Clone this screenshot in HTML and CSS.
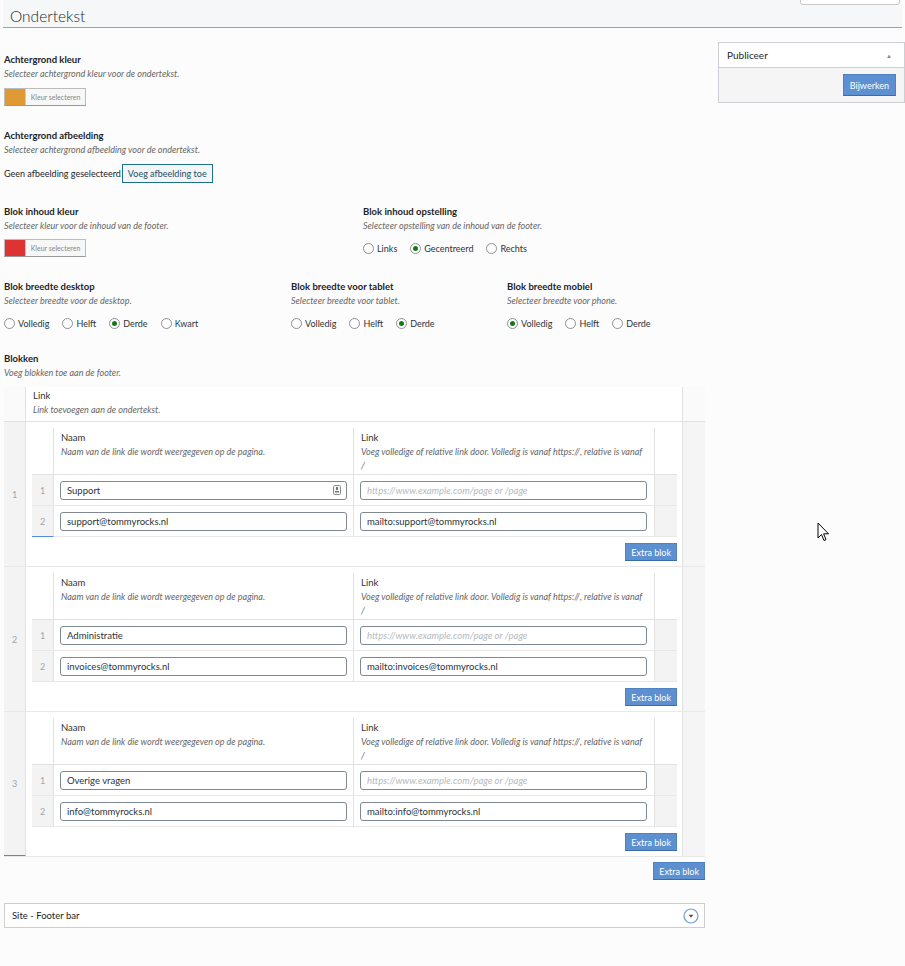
FILE: index.html
```html
<!DOCTYPE html>
<html lang="nl">
<head>
  <meta charset="UTF-8" />
  <title>Ondertekst</title>
  <link rel="stylesheet" href="styles.css">
</head>
<body>
  <!-- Screen options tab (cut off at top) -->
  <div class="screen-tab"></div>

  <header class="page-head">
    <h1>Ondertekst</h1>
  </header>

  <div class="columns">
    <main class="main">

      <div class="field">
        <div class="label">Achtergrond kleur</div>
        <div class="desc">Selecteer achtergrond kleur voor de ondertekst.</div>
        <div class="control">
          <button class="color-pick"><span class="swatch orange"></span><span class="pick-text">Kleur selecteren</span></button>
        </div>
      </div>

      <div class="field">
        <div class="label">Achtergrond afbeelding</div>
        <div class="desc">Selecteer achtergrond afbeelding voor de ondertekst.</div>
        <div class="control">
          <span class="no-image">Geen afbeelding geselecteerd</span>
          <button class="btn-outline">Voeg afbeelding toe</button>
        </div>
      </div>

      <div class="field-row two">
        <div class="field">
          <div class="label">Blok inhoud kleur</div>
          <div class="desc">Selecteer kleur voor de inhoud van de footer.</div>
          <div class="control">
            <button class="color-pick"><span class="swatch red"></span><span class="pick-text">Kleur selecteren</span></button>
          </div>
        </div>
        <div class="field">
          <div class="label">Blok inhoud opstelling</div>
          <div class="desc">Selecteer opstelling van de inhoud van de footer.</div>
          <div class="control">
            <span class="radio"><span class="dot"></span>Links</span>
            <span class="radio on"><span class="dot"></span>Gecentreerd</span>
            <span class="radio"><span class="dot"></span>Rechts</span>
          </div>
        </div>
      </div>

      <div class="field-row three widths">
        <div class="field">
          <div class="label">Blok breedte desktop</div>
          <div class="desc">Selecteer breedte voor de desktop.</div>
          <div class="control">
            <span class="radio"><span class="dot"></span>Volledig</span>
            <span class="radio"><span class="dot"></span>Helft</span>
            <span class="radio on"><span class="dot"></span>Derde</span>
            <span class="radio"><span class="dot"></span>Kwart</span>
          </div>
        </div>
        <div class="field">
          <div class="label">Blok breedte voor tablet</div>
          <div class="desc">Selecteer breedte voor tablet.</div>
          <div class="control">
            <span class="radio"><span class="dot"></span>Volledig</span>
            <span class="radio"><span class="dot"></span>Helft</span>
            <span class="radio on"><span class="dot"></span>Derde</span>
          </div>
        </div>
        <div class="field">
          <div class="label">Blok breedte mobiel</div>
          <div class="desc">Selecteer breedte voor phone.</div>
          <div class="control">
            <span class="radio on"><span class="dot"></span>Volledig</span>
            <span class="radio"><span class="dot"></span>Helft</span>
            <span class="radio"><span class="dot"></span>Derde</span>
          </div>
        </div>
      </div>

      <div class="field blokken">
        <div class="label">Blokken</div>
        <div class="desc">Voeg blokken toe aan de footer.</div>

        <div class="repeater">
          <div class="rep-head">
            <div class="handle"></div>
            <div class="head-cell">
              <div class="col-label">Link</div>
              <div class="col-desc">Link toevoegen aan de ondertekst.</div>
            </div>
            <div class="rm"></div>
          </div>

          <!-- Blok 1 -->
          <div class="rep-row">
            <div class="handle num">1</div>
            <div class="rep-body">
              <div class="links">
                <div class="l-handle"></div>
                <div class="l-head"><div class="col-label">Naam</div><div class="col-desc">Naam van de link die wordt weergegeven op de pagina.</div></div>
                <div class="l-head"><div class="col-label">Link</div><div class="col-desc">Voeg volledige of relative link door. Volledig is vanaf https://, relative is vanaf /</div></div>
                <div class="l-rm"></div>

                <div class="l-num">1</div>
                <div class="l-cell"><div class="input-wrap"><input class="input" value="Support">
                  <svg class="pw-icon" width="8" height="10" viewBox="0 0 8 10"><rect x="0.5" y="0.5" width="7" height="9" rx="1" fill="#f4f4f4" stroke="#8a8a8a"/><rect x="3" y="2" width="2" height="3" fill="#777"/><rect x="2" y="6" width="4" height="1.5" fill="#777"/></svg>
                </div></div>
                <div class="l-cell"><input class="input" placeholder="https://www.example.com/page or /page"></div>
                <div class="l-side"></div>

                <div class="l-num active">2</div>
                <div class="l-cell"><input class="input" value="support@tommyrocks.nl"></div>
                <div class="l-cell"><input class="input" value="mailto:support@tommyrocks.nl"></div>
                <div class="l-side"></div>
              </div>
              <div class="row-actions"><button class="btn-blue">Extra blok</button></div>
            </div>
            <div class="rm"></div>
          </div>

          <!-- Blok 2 -->
          <div class="rep-row">
            <div class="handle num">2</div>
            <div class="rep-body">
              <div class="links">
                <div class="l-handle"></div>
                <div class="l-head"><div class="col-label">Naam</div><div class="col-desc">Naam van de link die wordt weergegeven op de pagina.</div></div>
                <div class="l-head"><div class="col-label">Link</div><div class="col-desc">Voeg volledige of relative link door. Volledig is vanaf https://, relative is vanaf /</div></div>
                <div class="l-rm"></div>

                <div class="l-num">1</div>
                <div class="l-cell"><input class="input" value="Administratie"></div>
                <div class="l-cell"><input class="input" placeholder="https://www.example.com/page or /page"></div>
                <div class="l-side"></div>

                <div class="l-num">2</div>
                <div class="l-cell"><input class="input" value="invoices@tommyrocks.nl"></div>
                <div class="l-cell"><input class="input" value="mailto:invoices@tommyrocks.nl"></div>
                <div class="l-side"></div>
              </div>
              <div class="row-actions"><button class="btn-blue">Extra blok</button></div>
            </div>
            <div class="rm"></div>
          </div>

          <!-- Blok 3 -->
          <div class="rep-row">
            <div class="handle num active">3</div>
            <div class="rep-body">
              <div class="links">
                <div class="l-handle"></div>
                <div class="l-head"><div class="col-label">Naam</div><div class="col-desc">Naam van de link die wordt weergegeven op de pagina.</div></div>
                <div class="l-head"><div class="col-label">Link</div><div class="col-desc">Voeg volledige of relative link door. Volledig is vanaf https://, relative is vanaf /</div></div>
                <div class="l-rm"></div>

                <div class="l-num">1</div>
                <div class="l-cell"><input class="input" value="Overige vragen"></div>
                <div class="l-cell"><input class="input" placeholder="https://www.example.com/page or /page"></div>
                <div class="l-side"></div>

                <div class="l-num">2</div>
                <div class="l-cell"><input class="input" value="info@tommyrocks.nl"></div>
                <div class="l-cell"><input class="input" value="mailto:info@tommyrocks.nl"></div>
                <div class="l-side"></div>
              </div>
              <div class="row-actions"><button class="btn-blue">Extra blok</button></div>
            </div>
            <div class="rm"></div>
          </div>
        </div>

        <div class="rep-footer"><button class="btn-blue">Extra blok</button></div>
      </div>

      <div class="postbox">
        <span>Site - Footer bar</span>
        <svg width="16" height="16" viewBox="0 0 16 16"><circle cx="8" cy="8" r="7" fill="#fff" stroke="#6b9bd6" stroke-width="1.2"/><path d="M5.5 6.8 L10.5 6.8 L8 9.8 Z" fill="#555"/></svg>
      </div>
    </main>

    <aside class="side">
      <div class="publish">
        <div class="publish-head">
          <span>Publiceer</span>
          <span class="toggle">&#9650;</span>
        </div>
        <div class="publish-actions">
          <button class="btn-blue big">Bijwerken</button>
        </div>
      </div>
    </aside>
  </div>

  <!-- mouse pointer -->
  <svg class="cursor" width="13" height="20" viewBox="0 0 13 20"><path d="M1 1 L1 16 L4.5 12.5 L7 18.5 L9 17.6 L6.6 11.8 L11.5 11.8 Z" fill="#fff" stroke="#000" stroke-width="1" stroke-linejoin="round"/></svg>
</body>
</html>
```

FILE: styles.css
```css
/* Basic Reset */
* {
  box-sizing: border-box;
}

body {
  margin: 0;
  height: 966px;
  overflow: hidden;
  position: relative;
  background-color: #fcfcfc;
  font-family: Lato, "Open Sans", sans-serif;
  font-size: 9px;
  color: #1d2327;
}

button, input {
  font-family: inherit;
}

/* TOP RIGHT TAB */
.screen-tab {
  position: absolute;
  top: -2px;
  left: 800px;
  width: 100px;
  height: 7px;
  background: #fff;
  border: 1px solid #c8c8c8;
  border-radius: 0 0 3px 3px;
}

/* PAGE HEADER */
.page-head {
  margin: 0 3px;
  height: 28px;
  background-color: #f6f7f9;
  border-bottom: 1px solid #8ea1c2;
  padding-left: 7px;
}
.page-head h1 {
  margin: 0;
  font-size: 15.5px;
  font-weight: 300;
  line-height: 33px;
  color: #23282d;
}

.columns {
  display: flex;
  align-items: flex-start;
}

.main {
  width: 701px;
  margin-left: 4px;
  padding-top: 25px;
}

/* FIELDS */
.field {
  margin-bottom: 23px;
}
.field-row {
  display: grid;
}
.field-row .field {
  margin-bottom: 0;
}
.field-row.two {
  grid-template-columns: 359px 1fr;
  margin-bottom: 23px;
}
.field-row.three {
  grid-template-columns: 287px 216px 1fr;
}
.widths {
  margin-bottom: 20px;
}

.label {
  font-weight: 700;
  font-size: 9.5px;
  line-height: 14px;
}
.desc {
  font-style: italic;
  font-size: 9px;
  line-height: 14px;
  color: #666;
}
.control {
  margin-top: 7px;
  height: 18px;
  display: flex;
  align-items: center;
}
.field-row .control {
  margin-top: 6px;
}

/* COLOR PICKER BUTTON */
.color-pick {
  display: flex;
  height: 18px;
  padding: 0;
  border: 1px solid #bcbcbc;
  border-bottom-color: #999;
  background: #f7f7f7;
  cursor: pointer;
}
.swatch {
  width: 20px;
  height: 100%;
}
.swatch.orange { background: #e09a33; }
.swatch.red { background: #dd3333; }
.pick-text {
  padding: 0 4px 0 4px;
  border-left: 1px solid #ccc;
  font-size: 7px;
  line-height: 16px;
  color: #888;
  width: 60px;
}

.no-image {
  margin-right: 1px;
}
.btn-outline {
  height: 19px;
  padding: 0 5px;
  background: #f3f5f6;
  border: 1px solid #1f6f8f;
  color: #1d4f66;
  font-size: 9px;
  cursor: pointer;
}

/* RADIOS */
.radio {
  display: inline-flex;
  align-items: center;
  margin-right: 13px;
  color: #2c3338;
}
.radio .dot {
  position: relative;
  width: 11px;
  height: 11px;
  border: 1px solid #8c8f94;
  border-radius: 50%;
  background: #fff;
  margin-right: 3px;
}
.radio.on .dot::after {
  content: "";
  position: absolute;
  top: 2px;
  left: 2px;
  width: 5px;
  height: 5px;
  border-radius: 50%;
  background: #157a15;
}

/* REPEATER */
.blokken .desc {
  margin-bottom: 7px;
}
.repeater {
  width: 701px;
}
.rep-head, .rep-row {
  display: grid;
  grid-template-columns: 22px 1fr 23px;
}
.rep-head {
  height: 35px;
  background: #fff;
  border-bottom: 1px solid #e1e1e1;
}
.rep-head .handle {
  background: #fafafa;
  border-right: 1px solid #e1e1e1;
}
.rep-head .rm {
  border-left: 1px solid #e1e1e1;
  background: #fafafa;
}
.head-cell {
  padding: 2px 7px;
}
.col-label {
  font-size: 9.5px;
  line-height: 14px;
  color: #333;
}
.col-desc {
  font-style: italic;
  font-size: 9px;
  line-height: 14px;
  color: #666;
}

.rep-row {
  border-bottom: 1px solid #e8e8e8;
}
.handle.num {
  background: #f3f3f3;
  border-right: 1px solid #e1e1e1;
  display: flex;
  align-items: center;
  justify-content: center;
  color: #a0a5aa;
  font-size: 9px;
}
.handle.active {
  border-bottom: 1px solid #4f8bd6;
}
.rep-row .rm {
  background: #f5f5f5;
  border-left: 1px solid #e1e1e1;
}
.rep-body {
  background: #fff;
  padding: 6px 5px 5px 6px;
}

/* INNER LINKS TABLE */
.links {
  display: grid;
  grid-template-columns: 22px 300px 301px 22px;
  grid-template-rows: 47px 31px 31px;
}
.l-handle {
  border-right: 1px solid #e1e1e1;
  border-bottom: 1px solid #e1e1e1;
}
.l-head {
  padding: 3px 8px 3px 7px;
  border-right: 1px solid #e1e1e1;
  border-bottom: 1px solid #e1e1e1;
}
.l-rm {
  border-bottom: 1px solid #e1e1e1;
}
.l-num {
  background: #f3f3f3;
  border-right: 1px solid #e1e1e1;
  border-bottom: 1px solid #e8e8e8;
  display: flex;
  align-items: center;
  justify-content: center;
  color: #a0a5aa;
  font-size: 9px;
}
.l-num.active {
  border-bottom: 1px solid #4f8bd6;
}
.l-cell {
  padding: 6px 6px 0 6px;
  border-right: 1px solid #e1e1e1;
  border-bottom: 1px solid #e8e8e8;
}
.l-cell + .l-cell {
  padding-right: 7px;
}
.l-side {
  background: #f3f3f3;
  border-bottom: 1px solid #e8e8e8;
}

.input-wrap {
  position: relative;
}
.input {
  display: block;
  width: 100%;
  height: 19px;
  padding: 0 6px;
  border: 1px solid #7e8993;
  border-radius: 3px;
  background: #fff;
  font-size: 9.5px;
  color: #2c3338;
  outline: none;
}
.input::placeholder {
  font-style: italic;
  color: #b4b9be;
}
.pw-icon {
  position: absolute;
  right: 6px;
  top: 4px;
}

.row-actions {
  margin-top: 6px;
  display: flex;
  justify-content: flex-end;
}

.btn-blue {
  height: 18px;
  padding: 0 5px;
  background-color: #5c90d0;
  border: 1px solid #4f82c2;
  border-bottom-color: #3d6ba6;
  color: #fff;
  font-size: 9px;
  cursor: pointer;
}
.btn-blue.big {
  height: 22px;
  padding: 0 6px;
  font-size: 9px;
}

.rep-footer {
  margin-top: 5px;
  display: flex;
  justify-content: flex-end;
}

/* SITE - FOOTER BAR POSTBOX */
.postbox {
  margin-top: 23px;
  height: 25px;
  background: #fff;
  border: 1px solid #cfcfcf;
  display: flex;
  align-items: center;
  justify-content: space-between;
  padding: 0 5px 0 7px;
  font-size: 9.5px;
}

/* PUBLISH SIDEBAR */
.side {
  width: 188px;
  margin-left: 13px;
  margin-top: 14px;
}
.publish {
  border: 1px solid #ccd0d4;
  background: #fff;
}
.publish-head {
  height: 25px;
  display: flex;
  align-items: center;
  justify-content: space-between;
  padding: 0 12px 0 8px;
  border-bottom: 1px solid #ccd0d4;
  font-size: 10px;
  color: #23282d;
}
.toggle {
  font-size: 6px;
  color: #888;
}
.publish-actions {
  height: 34px;
  background: #f5f5f5;
  display: flex;
  align-items: center;
  justify-content: flex-end;
  padding-right: 8px;
}

.cursor {
  position: absolute;
  left: 817px;
  top: 522px;
}
```
